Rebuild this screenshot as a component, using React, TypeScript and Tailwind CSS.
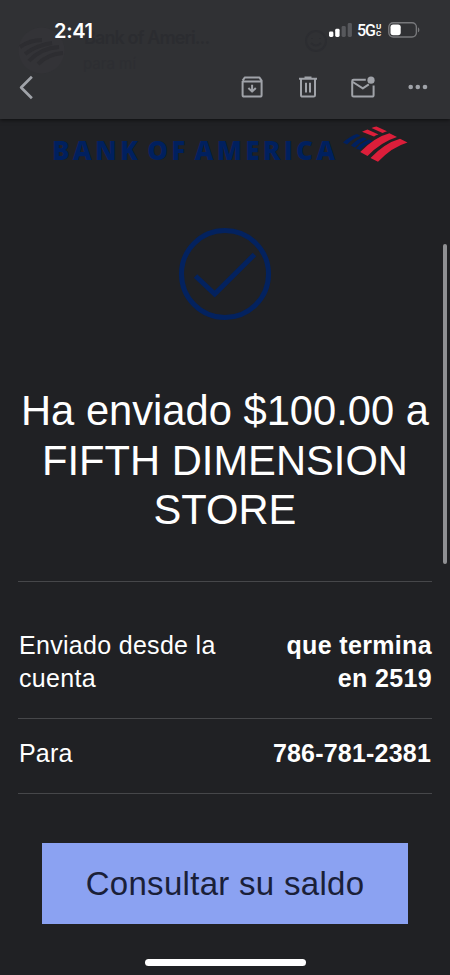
import { ChevronLeft } from "lucide-react";

const SignalIcon = () => (
    <svg width="24" height="16" viewBox="0 0 24 16" fill="#fff">
        <rect x="0" y="9.5" width="4.4" height="5.5" rx="1.4" />
        <rect x="6.2" y="6.8" width="4.4" height="8.2" rx="1.4" />
        <rect x="12.6" y="4" width="4.2" height="11" rx="1.4" fill="#57585c" />
        <rect x="18.7" y="1" width="4.2" height="14" rx="1.4" fill="#57585c" />
    </svg>
);

const BatteryIcon = () => (
    <svg width="33" height="16" viewBox="0 0 33 16" fill="none">
        <rect x="0.8" y="0.8" width="27.6" height="14.2" rx="4.4" stroke="#77787b" strokeWidth="1.4" />
        <rect x="2.5" y="2.6" width="10.2" height="10.6" rx="2.6" fill="#fff" />
        <path d="M30 5.4c1.8.6 1.8 4.2 0 4.8z" fill="#77787b" />
    </svg>
);

const ArchiveIcon = () => (
    <svg width="22" height="22" viewBox="0 0 22 22" fill="none" stroke="#a0a3a9" strokeWidth="2" strokeLinejoin="round">
        <path d="M1.6 5V19a1.6 1.6 0 0 0 1.6 1.6H19a1.6 1.6 0 0 0 1.6-1.6V4.6L18.3 1.4H3.9L1.6 4.6M1.6 5.4H20.6" />
        <path d="M11.1 8.8v6.4M7.4 12l3.7 3.6 3.7-3.6" />
    </svg>
);

const TrashIcon = () => (
    <svg width="20" height="22" viewBox="0 0 20 22" fill="none" stroke="#a0a3a9" strokeWidth="2">
        <path d="M1 2.8h18M6.5 1.5h7M3 3v16.2a1.4 1.4 0 0 0 1.4 1.4h11.2a1.4 1.4 0 0 0 1.4-1.4V3M8 6.8v9.8M12 6.8v9.8" />
    </svg>
);

const UnreadIcon = () => (
    <svg width="24" height="22" viewBox="0 0 24 22" fill="none" stroke="#a0a3a9" strokeWidth="2" strokeLinejoin="round">
        <path d="M14.8 3.8H2.6A1.4 1.4 0 0 0 1.2 5.2v14a1.4 1.4 0 0 0 1.4 1.4h18.6a1.4 1.4 0 0 0 1.4-1.4V9.4" />
        <path d="M1.8 6l10 6.4 6-4" />
        <circle cx="20" cy="4.2" r="3.6" fill="#a0a3a9" stroke="none" />
    </svg>
);

const DotsIcon = () => (
    <svg width="20" height="6" viewBox="0 0 20 6" fill="#a0a3a9">
        <circle cx="2.7" cy="3" r="2.3" />
        <circle cx="9.8" cy="3" r="2.3" />
        <circle cx="17" cy="3" r="2.3" />
    </svg>
);

const FlagLogo = () => (
    <svg width="66" height="38" viewBox="0 0 66 38">
        <g fill="#00205f">
            <path d="M0 16.5Q7 10 14 8l3.6 1.8Q10 12.5 4 18.5z" />
            <path d="M8 19.5Q14 13 20.5 11.2L24 13Q17 16 11.5 21.5z" />
            <path d="M13 22.5Q19 16 26 13.6L30 15.600Q22 18.500 17 24z" />
        </g>
        <g fill="#dc1e3a">
            <path d="M19 5.800Q22 4 24.500 3.400L35.500 8.400Q33 9 31 10.500z" />
            <path d="M28.500 2Q31 .8 33.500 .4L44 5.200Q42 5.600 39.500 7z" />
            <path d="M17.200 26Q32 11 46.500 7.300L54 11Q38 16 24.500 30z" />
            <path d="M27.500 32Q42 17 57 12.800L64.500 16.500Q49 21 35 35.800z" />
        </g>
    </svg>
);

const CheckCircle = () => (
    <svg width="94" height="94" viewBox="0 0 94 94" fill="none" stroke="#03225f" strokeWidth="5">
        <circle cx="47" cy="47" r="43.5" />
        <path d="M17.5 49l19.2 18L76.5 27.5" />
    </svg>
);

// Message header that shows faintly through the toolbar
const SenderGhost = () => (
    <div className="absolute inset-0 text-[#2b2c30]">
        <svg className="absolute left-[18px] top-[27px]" width="47" height="47" viewBox="0 0 47 47">
            <circle cx="23.5" cy="23.5" r="23" fill="#333337" />
            <g fill="none" stroke="#2d2d31" strokeWidth="4">
                <path d="M2 20Q12 13 24 13M7 27Q19 18 34 16M11 34Q23 21 41 20M20 37Q30 27 45 26" />
            </g>
        </svg>
        <span className="absolute left-[84px] top-[26px] text-[18px] leading-6 font-semibold tracking-[-0.9px]">Bank of Ameri...</span>
        <span className="absolute left-[83px] top-[54px] text-[15px] leading-5 text-[#2d2e32]">para mí</span>
        <svg className="absolute left-[304px] top-[29px]" width="24" height="24" viewBox="0 0 24 24" fill="none" stroke="#2c2d31" strokeWidth="2">
            <circle cx="12" cy="12" r="10" />
            <path d="M7 14q5 5 10 0M8 9v1M16 9v1" />
        </svg>
    </div>
);

const StatusBar = () => (
    <div className="relative flex h-[60px] items-start pl-[54px] pr-[29px] pt-[20px] text-white">
        <span className="text-[20px] leading-[22px] font-semibold tracking-[-0.3px]">2:41</span>
        <div className="ml-auto flex h-[20px] items-center">
            <SignalIcon />
            <span className="ml-[4px] mt-px w-[19px] font-[Roboto,sans-serif] text-[16px] leading-5 font-medium tracking-[-1px]">5G</span>
            <span className="mr-[6px] flex w-[6px] flex-col font-[Roboto,sans-serif] text-[8px] leading-[7px] font-bold">
                <span>U</span>
                <span>C</span>
            </span>
            <BatteryIcon />
        </div>
    </div>
);

const Toolbar = () => (
    <div className="relative flex h-[54px] items-center pl-[5px] pr-[22px]">
        <ChevronLeft color="#a0a3a9" size={43} strokeWidth={1.5} strokeLinecap="butt" />
        <div className="ml-auto flex items-center">
            <ArchiveIcon />
            <span className="w-[35px]" />
            <TrashIcon />
            <span className="w-[33px]" />
            <UnreadIcon />
            <span className="w-[33px]" />
            <DotsIcon />
        </div>
    </div>
);

export default function App() {
    return (
        <div className="relative flex h-[975px] w-[450px] flex-col overflow-hidden bg-[#202124] font-['Liberation_Sans',Arial,sans-serif] text-white">
            <header className="relative h-[119px] shrink-0 bg-[#303134] font-[Inter,sans-serif] shadow-[0_1px_4px_rgba(0,0,0,0.6)]">
                <SenderGhost />
                <StatusBar />
                <Toolbar />
            </header>

            <main className="flex flex-col px-[18px]">
                {/* Brand */}
                <div className="flex h-[56px] items-start pl-[34px] pt-[7px]">
                    <span className="w-[291px] whitespace-nowrap pt-[7px] font-['Open_Sans',sans-serif] text-[26px] leading-[34px] font-extrabold tracking-[3.3px] [word-spacing:-4px] text-[#00205f]">
                        BANK OF AMERICA
                    </span>
                    <FlagLogo />
                </div>

                <div className="mt-[52px] flex justify-center">
                    <CheckCircle />
                </div>

                <h1 className="-mx-2 mt-[65px] text-center text-[41.7px] leading-[49.5px]">
                    Ha enviado $100.00 a
                    <br />
                    FIFTH DIMENSION
                    <br />
                    STORE
                </h1>

                {/* Details */}
                <dl className="mt-[46px] border-t border-[#46474a] text-[25px] leading-[33.5px]">
                    <div className="flex h-[137px] justify-between border-b border-[#46474a] pt-[47px]">
                        <dt className="w-[230px] pl-px tracking-[0.3px]">Enviado desde la cuenta</dt>
                        <dd className="w-[160px] text-right font-bold tracking-[0.35px]">que termina en 2519</dd>
                    </div>
                    <div className="flex h-[75px] justify-between border-b border-[#46474a] pt-[18px]">
                        <dt className="pl-px tracking-[0.2px]">Para</dt>
                        <dd className="pr-px font-bold tracking-[0.2px]">786-781-2381</dd>
                    </div>
                </dl>

                <button className="mx-[24px] mt-[49px] h-[81px] bg-[#8ba2f2] pt-px text-[33px] tracking-[0.3px] text-[#1a2038]">
                    Consultar su saldo
                </button>
            </main>

            {/* Scrollbar and home indicator */}
            <div className="absolute right-[3px] top-[244px] h-[320px] w-[4px] rounded-full bg-[#8f9093]" />
            <div className="absolute bottom-[9px] left-[145px] h-[7px] w-[161px] rounded-full bg-white" />
        </div>
    );
}
